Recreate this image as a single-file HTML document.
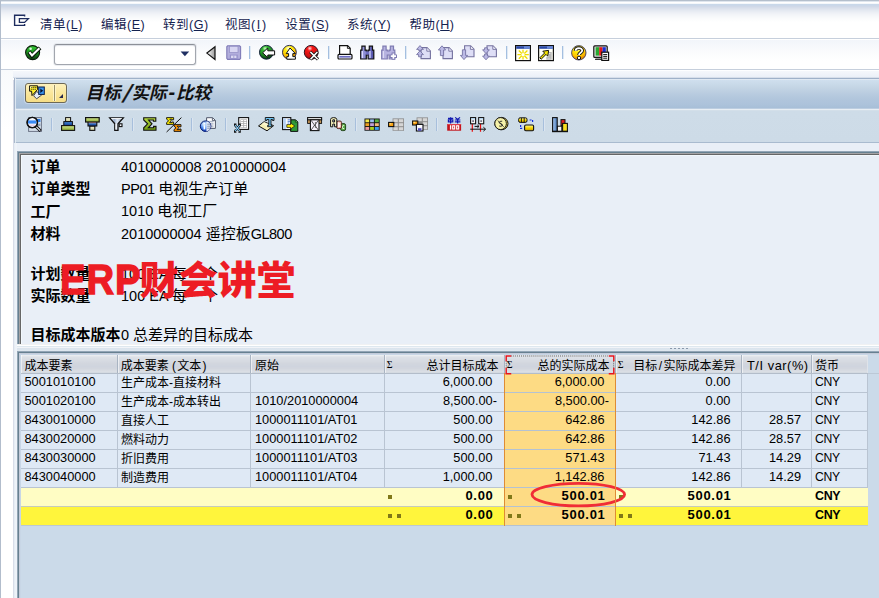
<!DOCTYPE html>
<html lang="zh-CN">
<head>
<meta charset="utf-8">
<title>目标/实际-比较</title>
<style>
*{box-sizing:border-box;margin:0;padding:0}
html,body{width:879px;height:598px;overflow:hidden;background:#fff}
body{position:relative;font-family:"Liberation Sans","Noto Sans CJK SC",sans-serif;font-size:12px;color:#000}
.abs{position:absolute}
#topgrad{left:0;top:0;width:879px;height:38px;background:linear-gradient(#b4bfcc 0,#b4bfcc 1px,#dfe6ee 1px,#dfe6ee 2px,#fff 2px,#fff 3px,#f5f8fb 3px,#f5f8fb 4px,#c8d8ea 4px,#cbd8e9 5.5px,#d0d9e8 6.5px,#dbe1ec 8.5px,#e4e9f1 10.5px,#eceff5 12.5px,#f2f4f8 14.5px,#f6f8fa 16.5px,#fafbfc 18.5px,#fff 22px)}
#leftedge{left:0;top:0;width:1px;height:598px;background:#b2bdcc}
.hline{left:1px;width:878px;height:1px;background:#c6cfdc}
.menu span{position:absolute;top:16px;font-size:12.5px;line-height:18px;color:#14224f;white-space:nowrap;letter-spacing:.5px}
.menu u{text-decoration:underline;text-underline-offset:1px}
#cmd{left:54px;top:44px;width:142px;height:21px;border:1px solid #a2a6ae;border-top-color:#8c9098;border-radius:3px;background:#fff;box-shadow:inset 0 1px 1px #dcdfe6,0 0 0 1px rgba(200,205,215,.35)}
.ic{position:absolute;width:16px;height:16px;overflow:visible}
.sep{position:absolute;width:2px;height:13px;background:linear-gradient(90deg,#a4bfe0 0,#a4bfe0 1px,#dfe9f4 1px)}
.sep.s2{background:linear-gradient(90deg,#a7bfdc 0,#a7bfdc 1px,#dbe5f0 1px)}
#tbtn{left:25px;top:83px;width:42px;height:20px;border:1px solid #6c6856;border-radius:3px;background:linear-gradient(#fdf1bc,#fae79c 50%,#f6dd86);box-shadow:0 0 0 1px rgba(210,222,236,.7)}
#tbtn i{position:absolute;left:27px;top:1px;width:3px;height:16px;background:linear-gradient(90deg,#fdf4c8 0,#fdf4c8 1px,#9c9268 1px,#9c9268 2px,#fdf4c8 2px)}
#tbtn b{position:absolute;left:33px;top:10px;width:0;height:0;border-left:4.5px solid transparent;border-bottom:4.5px solid #26264a}
#titlebar{left:14px;top:78px;width:865px;height:31px;background:linear-gradient(#9fb1c9 0,#9fb1c9 1px,#e0e9f3 1px,#e0e9f3 2px,#cfdfee 2px,#c9dae9 6px,#c3d4e4 10px,#bccee1 14px,#b5c9de 18px,#b0c5dc 22px,#adc3db 26px,#a8bfd8 29.5px,#bccde0 30.5px);box-shadow:inset 1px 0 0 #a3b3c9,inset 2px 0 0 rgba(232,240,248,.8)}
#title{left:85.5px;top:81px;font-size:17.5px;font-weight:bold;font-style:italic;line-height:24px;color:#111;white-space:nowrap}
#apptb{left:14px;top:109px;width:865px;height:34px;background:linear-gradient(#e8eef4 0,#e8eef4 1px,#d3dfe9 1px,#d3dfe9 2px,#cedce8 2px,#cddbe7 33px,#a9bbcf 33px);box-shadow:inset 1px 0 0 #a9b9cb,inset 2px 0 0 rgba(232,239,246,.85)}
#below{left:13px;top:143px;width:866px;height:455px;background:linear-gradient(90deg,#d8dde9 0,#d8dde9 1px,#e6edf4 1px,#e6edf4 2px,#edf2f8 2px,#edf2f8 3px,#eef3f9 3px,#eef3f9 4px,#e9eff7 4px)}
#info{left:17px;top:151px;width:870px;height:195px;border-bottom:1px solid #fff;background:#e9eff7;box-shadow:inset 0 -1px 0 #f0f1f2,inset 1px 1px 0 #93a5b6,inset 2px 2px 0 #668090,inset 3px 3px 0 #a4a3a5,inset 4px 4px 0 #666,inset 5px 5px 0 #f2f8fd}
.lbl{position:absolute;left:30.5px;font-size:15px;font-weight:bold;line-height:20px;white-space:nowrap}
.val{position:absolute;margin-top:-.4px;left:121px;font-size:14.5px;line-height:20px;white-space:nowrap}
.val b{font-weight:normal;font-size:15px}
#wm{left:60px;top:256px;font-size:39px;line-height:48px;font-weight:900;color:#ed1c24;white-space:nowrap;letter-spacing:0}
#wm .e{display:inline-block;width:79.5px;font-size:42px;font-weight:bold;-webkit-text-stroke:1.3px #ed1c24;letter-spacing:1px;transform:scaleX(.91);transform-origin:0 0;vertical-align:baseline}
#gridarea{left:17px;top:346px;width:862px;height:6px;background:linear-gradient(#dee8ef 0,#dee8ef 1px,#f2f4f8 1px,#f2f4f8 2px,#dbe4ed 2px,#dde6ee 4px,#e0e9f0 5px)}
#gridframe{left:17px;top:351px;width:870px;height:260px;background:#cbdae9;box-shadow:inset 1px 1px 0 #93a5b6,inset 2px 2px 0 #668090,inset 3px 3px 0 #c2cad9,inset 4px 4px 0 #c8d6e6}
#grip{left:670px;top:348px;width:19px;height:1px;background:repeating-linear-gradient(90deg,#8a98aa 0,#8a98aa 2px,transparent 2px,transparent 4px)}
table{position:absolute;left:21px;top:355px;border-collapse:collapse;table-layout:fixed;width:846px}
th{height:18px}
td,th{height:19px;border-right:1px solid #b9c4d2;border-bottom:1px solid #b9c4d2;font-weight:normal;font-size:12px;line-height:16px;vertical-align:top;padding:0 0 0 5px;text-align:left;white-space:nowrap;overflow:hidden;background:#dfe9f5}
th{height:18px;padding-top:5px;padding-left:4.5px;line-height:12px;vertical-align:top;background:linear-gradient(#eef0f2 0,#e2e5ea 1.5px,#dce0e6 2.5px,#d2d6de 8.5px,#cfd4de 11.5px,#d2d6de 13.5px,#dadee4 16.5px,#d4dae1 17.5px);border-right:1px solid #a9b4c2;border-bottom:1px solid #b3bdca;position:relative;box-shadow:inset 1px 0 0 rgba(255,255,255,.55)}
td.n,th.n{text-align:right;padding:0 11px 0 0;font-size:12.8px}
td.d{font-size:12.8px;padding-left:4.5px}
td.sel{background:#fddb84;border-bottom-color:#b4c2d2}
tr.s1 td,tr.s2 td{font-size:13px;letter-spacing:.7px}
tr.s1 td.n,tr.s2 td.n{padding-right:9.3px}
tr.s1 td{background:#fffdc4;font-weight:bold;border-right-color:#fffdc4;border-bottom-color:#c6cbbc}
tr.s2 td{background:#fff53c;font-weight:bold;border-right-color:#fff53c;border-bottom-color:#bcc8d0}
tr.s1 td.sel,tr.s2 td.sel{background:#fddb84;border-right-color:#fddb84;border-bottom-color:#b4c2d2}
td.n{position:relative}
td.neg{padding-right:6.5px}
th.n{padding:5px 5px 0 0;font-size:12px}
td.d1{padding-left:3.5px}
td.c{padding-top:2px;padding-left:3.5px;line-height:15px}
.sg{position:absolute;left:2.3px;top:3.5px;font-size:10px;line-height:12px;font-family:"Liberation Serif","DejaVu Serif",serif}
.dt{position:absolute;left:3px;top:7.5px;width:4px;height:4px;background:#807818}
.dt.d2{left:12px}
td.n:nth-child(5),td.n:nth-child(6){padding-right:10px}
td.n:nth-child(7){padding-right:9.5px}
td.neg:nth-child(4){padding-right:6.5px}td.neg:nth-child(5){padding-right:5.5px}
tr.s1 td.n:nth-child(4),tr.s2 td.n:nth-child(4){padding-right:10px}
tr.s1 td.n:nth-child(5),tr.s2 td.n:nth-child(5),tr.s1 td.n:nth-child(6),tr.s2 td.n:nth-child(6){padding-right:9px}
td.cy{font-size:12.2px;letter-spacing:-.35px;padding-left:3.5px}
tr.s1 td.cy,tr.s2 td.cy{font-size:12.4px;letter-spacing:-.3px}
#ell{left:529px;top:481px;width:99px;height:28px;overflow:visible}
#selL,#selR{top:373px;width:1px;height:153px;background:#de8c34}
#selL{left:504px}#selR{left:615px}
#hsel{left:504px;top:354.5px;width:112px;height:19.5px;overflow:visible}

</style>
</head>
<body>
<div class="abs" id="topgrad"></div>
<div class="abs hline" style="top:38px"></div>
<div class="abs" style="left:1px;top:39px;width:878px;height:30px;background:linear-gradient(#fff 0,#fff 1px,#f2f5fa 1px,#f4f7fb 4px,#fbfcfd 14px,#fff 22px)"></div>
<div class="abs hline" style="top:69px"></div>
<div class="abs" style="left:1px;top:70px;width:878px;height:8px;background:linear-gradient(#fdfeff 0,#fdfeff 1px,#f5f7fb 1px,#ebf0f8 7px,#d8dfea 7px)"></div>
<div class="abs" style="left:1px;top:70px;width:12px;height:528px;background:linear-gradient(#f8fafc,#fff 60px)"></div>
<div class="abs" style="left:13px;top:80px;width:1px;height:63px;background:#d5d9e6"></div>
<div class="abs" id="leftedge"></div>

<svg class="abs" style="left:13px;top:14px;width:18px;height:13px;overflow:visible" viewBox="0 0 18 13"><path d="M11.6 2.6 V1.2 H1.6 V11.4 H11.6 V10" fill="none" stroke="#1d2c5e" stroke-width="1.4"/><path d="M6.4 4.6 H15.4 L11.6 8.4 H6.4 Z" fill="none" stroke="#1d2c5e" stroke-width="1.3" stroke-linejoin="miter"/></svg>
<div class="menu">
<span style="left:40px">清单(<u>L</u>)</span>
<span style="left:101px">编辑(<u>E</u>)</span>
<span style="left:163px">转到(<u>G</u>)</span>
<span style="left:225px">视图(<u style="padding:0 1.2px">I</u>)</span>
<span style="left:285.3px">设置(<u>S</u>)</span>
<span style="left:347px">系统(<u>Y</u>)</span>
<span style="left:409.5px">帮助(<u>H</u>)</span>
</div>

<div class="abs" id="cmd"></div>
<svg class="abs" style="left:180px;top:50.5px;width:10px;height:6px" viewBox="0 0 10 6"><path d="M.6 .6 H9.2 L4.9 5.2 Z" fill="#1f2f62"/></svg>

<!-- ICONS-STD -->
<svg width="0" height="0" style="position:absolute">
<defs>
<radialGradient id="gG" cx="40%" cy="22%" r="80%"><stop offset="0" stop-color="#d8ffc8"/><stop offset=".22" stop-color="#34b834"/><stop offset=".6" stop-color="#1f8a24"/><stop offset="1" stop-color="#083010"/></radialGradient>
<radialGradient id="gY" cx="42%" cy="22%" r="85%"><stop offset="0" stop-color="#fffff0"/><stop offset=".25" stop-color="#ffee10"/><stop offset=".6" stop-color="#ffc800"/><stop offset="1" stop-color="#d86800"/></radialGradient>
<radialGradient id="gR" cx="40%" cy="22%" r="85%"><stop offset="0" stop-color="#ffe0e0"/><stop offset=".22" stop-color="#f81818"/><stop offset=".65" stop-color="#d01010"/><stop offset="1" stop-color="#600808"/></radialGradient>
<linearGradient id="gG2" x1="0" y1="0" x2="0" y2="1"><stop offset="0" stop-color="#38d038"/><stop offset=".45" stop-color="#1f9a22"/><stop offset="1" stop-color="#0c3c10"/></linearGradient>
<linearGradient id="gTri" x1="0" x2="1"><stop offset="0" stop-color="#fff"/><stop offset="1" stop-color="#9a9a9a"/></linearGradient>
<linearGradient id="gBin" x1="0" x2="1"><stop offset="0" stop-color="#a8a8e8"/><stop offset="1" stop-color="#5050a8"/></linearGradient>
</defs>
</svg>
<!-- check -->
<svg class="ic" style="left:25px;top:45px" viewBox="0 0 16 16"><circle cx="7.6" cy="7.6" r="7" fill="url(#gG2)" stroke="#0a1a0a" stroke-width="1.1"/><circle cx="5.6" cy="3.8" r="1.3" fill="#fff" fill-opacity=".85"/><path d="M4 6.8 L7 10.8 L15 2.8" fill="none" stroke="#0a160a" stroke-width="4" stroke-linejoin="miter"/><path d="M4.4 7.2 L7 10.4 L14.4 3.2" fill="none" stroke="#fff" stroke-width="2.1"/></svg>
<!-- triangle -->
<svg class="ic" style="left:206px;top:46px" viewBox="0 0 16 16"><path d="M9 .8 L9 13.4 L.9 7.1 Z" fill="url(#gTri)" stroke="#111" stroke-width="1.2" stroke-linejoin="miter"/></svg>
<!-- floppy grey -->
<svg class="ic" style="left:226px;top:45px" viewBox="0 0 16 16"><path d="M1.6 .8 H13.6 L14.6 1.8 V13.4 L13.6 14.4 H1.6 L.8 13.4 V1.8 Z" fill="#b2aedc" stroke="#807cb8" stroke-width="1.1"/><rect x="3.4" y="1.3" width="8.6" height="6.2" fill="#d8d6f2" stroke="#908cc4" stroke-width=".7"/><rect x="3.8" y="9.6" width="8" height="4.6" fill="#9894cc"/><rect x="5" y="10.6" width="5.4" height="2.4" fill="#dcdaf2"/><path d="M7.8 10.6 V13" stroke="#9894cc" stroke-width=".8"/></svg>
<!-- green back -->
<svg class="ic" style="left:259px;top:45px" viewBox="0 0 16 16"><circle cx="7.4" cy="7.3" r="6.9" fill="url(#gG)" stroke="#14203a" stroke-width="1"/><path d="M3.6 7.8 L8.8 3 L8.8 5.8 L15.6 5.8 L15.6 10 L8.8 10 L8.8 12.6 Z" fill="#fff" stroke="#111" stroke-width="1" stroke-linejoin="miter"/></svg>
<!-- yellow up -->
<svg class="ic" style="left:282px;top:45px" viewBox="0 0 16 16"><circle cx="7.4" cy="7.3" r="6.9" fill="url(#gY)" stroke="#2a2a50" stroke-width="1"/><path d="M8 3 L13.4 8.6 L10.8 8.6 L10.8 11.6 L13.4 11.6 L13.4 14.2 L4.8 14.2 L4.8 11.6 L6.6 11.6 L6.6 8.6 L4.2 8.6 Z" fill="#fff" stroke="#111" stroke-width="1" stroke-linejoin="miter"/></svg>
<!-- red cancel -->
<svg class="ic" style="left:304px;top:45px" viewBox="0 0 16 16"><circle cx="7.2" cy="7.3" r="6.9" fill="url(#gR)" stroke="#2a1420" stroke-width="1"/><path d="M6.2 6.8 L14 14.4 M13.6 6.8 L6.4 14.4" stroke="#181818" stroke-width="3.2"/><path d="M6.4 7 L13.8 14.2 M13.4 7 L6.6 14.2" stroke="#fff" stroke-width="1.6"/></svg>
<!-- print -->
<svg class="ic" style="left:337px;top:45px" viewBox="0 0 16 16"><path d="M2.6 .6 L10.6 .6 L13.2 3.2 L13.2 9.6 L2.6 9.6 Z" fill="#fff" stroke="#111" stroke-width="1.2"/><path d="M10.4 .8 L10.4 3.4 L13 3.4" fill="none" stroke="#111" stroke-width=".9"/><rect x="1" y="9.4" width="14" height="4.6" rx="1" fill="#f2f2fa" stroke="#111" stroke-width="1.2"/><rect x="2.4" y="11" width="11.2" height="1.6" fill="#6a6ac0"/></svg>
<!-- binoculars -->
<svg class="ic" style="left:360px;top:45px" viewBox="0 0 16 16"><path d="M.7 14 V5.2 H1.9 V1.2 H5.1 V5.2 H6.3 V6 H8.1 V5.2 H9.3 V1.2 H12.5 V5.2 H13.8 V14 H8.1 V10 H6.3 V14 Z" fill="url(#gBin)" stroke="#111" stroke-width="1.2" stroke-linejoin="miter"/><path d="M2.4 6 V13 M10 6 V13" stroke="#dcdcff" stroke-width="1.2"/><path d="M6.3 6.6 H8.1 V9.6 H6.3 Z" fill="#6a6ac0"/></svg>
<!-- binoculars plus grey -->
<svg class="ic" style="left:381px;top:45px" viewBox="0 0 16 16"><path d="M.7 14 V5.2 H1.9 V1.2 H5.1 V5.2 H6.3 V6 H8.1 V5.2 H9.3 V1.2 H12.5 V5.2 H13.8 V14 H8.1 V10 H6.3 V14 Z" fill="#b6b3e0" stroke="#7e7bb2" stroke-width="1.2" stroke-linejoin="miter"/><path d="M2.4 6 V13" stroke="#dcdaf4" stroke-width="1.2"/><path d="M12.4 7.6 V14.8 M8.8 11.2 H16" stroke="#7e7bb2" stroke-width="3.6"/><path d="M12.4 8.6 V13.8 M9.8 11.2 H15" stroke="#fff" stroke-width="1.7"/></svg>
<!-- first page grey -->
<svg class="ic" style="left:416px;top:45px" viewBox="0 0 16 16"><path d="M5 2.6 L11 2.6 L14.4 6 L14.4 13.6 L5 13.6 Z" fill="#dedef6" stroke="#74729f" stroke-width="1.1"/><path d="M10.8 2.8 L10.8 6.2 L14.2 6.2" fill="#f2f2fc" stroke="#74729f" stroke-width=".9"/><path d="M4 .6 L7.4 4.4 L5.4 4.4 L5.4 5.4 L2.6 5.4 L2.6 4.4 L.6 4.4 Z M4 5.8 L7.4 9.6 L5.4 9.6 L5.4 11.8 L2.6 11.8 L2.6 9.6 L.6 9.6 Z" fill="#bcbae6" stroke="#7674a4" stroke-width=".9"/></svg>
<!-- prev page grey -->
<svg class="ic" style="left:437.5px;top:45px" viewBox="0 0 16 16"><path d="M5 2.6 L11 2.6 L14.4 6 L14.4 13.6 L5 13.6 Z" fill="#dedef6" stroke="#74729f" stroke-width="1.1"/><path d="M10.8 2.8 L10.8 6.2 L14.2 6.2" fill="#f2f2fc" stroke="#74729f" stroke-width=".9"/><path d="M4 .8 L7.6 5 L5.6 5 L5.6 10.6 L2.4 10.6 L2.4 5 L.4 5 Z" fill="#bcbae6" stroke="#7674a4" stroke-width=".9"/></svg>
<!-- next page grey -->
<svg class="ic" style="left:460px;top:45px" viewBox="0 0 16 16"><path d="M4.6 .8 L10.6 .8 L14 4.2 L14 11.8 L4.6 11.8 Z" fill="#dedef6" stroke="#74729f" stroke-width="1.1"/><path d="M10.4 1 L10.4 4.4 L13.8 4.4" fill="#f2f2fc" stroke="#74729f" stroke-width=".9"/><path d="M4 14.6 L7.6 10.4 L5.6 10.4 L5.6 4.8 L2.4 4.8 L2.4 10.4 L.4 10.4 Z" fill="#bcbae6" stroke="#7674a4" stroke-width=".9"/></svg>
<!-- last page grey -->
<svg class="ic" style="left:482px;top:45px" viewBox="0 0 16 16"><path d="M5 .8 L11 .8 L14.4 4.2 L14.4 11.8 L5 11.8 Z" fill="#dedef6" stroke="#74729f" stroke-width="1.1"/><path d="M10.8 1 L10.8 4.4 L14.2 4.4" fill="#f2f2fc" stroke="#74729f" stroke-width=".9"/><path d="M4 14.8 L7.4 11 L5.4 11 L5.4 9 L2.6 9 L2.6 11 L.6 11 Z M4 8.6 L7.4 4.8 L5.4 4.8 L5.4 2.8 L2.6 2.8 L2.6 4.8 L.6 4.8 Z" fill="#bcbae6" stroke="#7674a4" stroke-width=".9"/></svg>
<!-- new window -->
<svg class="ic" style="left:515px;top:45px" viewBox="0 0 16 16"><rect x=".6" y=".6" width="14.8" height="15" fill="#fffff6" stroke="#111" stroke-width="1.2"/><rect x="1.2" y="1.2" width="13.6" height="2.6" fill="#2848a8"/><rect x="9" y="1.2" width="5.8" height="2.6" fill="#6888d8"/><path d="M8 4.8 L8 8.2 M8 11 L8 14.6 M2.4 9.6 L6.4 9.6 M9.6 9.6 L13.8 9.6 M3.8 5.6 L6.8 8.4 M9.4 10.8 L12.4 13.8 M12.4 5.6 L9.4 8.4 M6.8 10.8 L3.8 13.8" stroke="#f0dc00" stroke-width="1.3"/></svg>
<!-- shortcut -->
<svg class="ic" style="left:537.5px;top:45px" viewBox="0 0 16 16"><rect x=".6" y=".6" width="14.8" height="15" fill="#fffff6" stroke="#111" stroke-width="1.2"/><rect x="1.2" y="1.2" width="13.6" height="2.6" fill="#2848a8"/><rect x="9" y="1.2" width="5.8" height="2.6" fill="#6888d8"/><path d="M10.4 7.6 L13 7.6 L13 14 L9 14 L9 12.4 L11.6 12.4 L11.6 9" fill="none" stroke="#b8b8b8" stroke-width="1.4"/><path d="M1.8 12.8 L6.6 8 L4.8 6.2 L10.6 5.4 L9.8 11.2 L8 9.4 L3.2 14.2 Z" fill="#f6e400" stroke="#111" stroke-width="1"/></svg>
<!-- help -->
<svg class="ic" style="left:571px;top:45px" viewBox="0 0 16 16"><circle cx="7.8" cy="7.8" r="7.2" fill="url(#gY)" stroke="#3a3a60" stroke-width=".9"/><path d="M4.6 5.8 C4.6 2.2 11.2 2.2 11.2 5.6 C11.2 7.8 8 7.8 8 10" fill="none" stroke="#111" stroke-width="3.6"/><path d="M4.6 5.8 C4.6 2.2 11.2 2.2 11.2 5.6 C11.2 7.8 8 7.8 8 10" fill="none" stroke="#fff" stroke-width="1.8"/><circle cx="8" cy="12.9" r="1.7" fill="#fff" stroke="#111" stroke-width="1"/></svg>
<!-- monitor -->
<svg class="ic" style="left:593px;top:45px" viewBox="0 0 16 16"><rect x=".8" y=".8" width="13.4" height="11.6" rx="1" fill="#e4e4e4" stroke="#111" stroke-width="1.2"/><rect x="2.6" y="2.2" width="3.6" height="8.4" fill="#28a830"/><rect x="6.2" y="2.2" width="3.4" height="8.4" fill="#e01818"/><rect x="9.6" y="2.2" width="3.2" height="8.4" fill="#1830d8"/><rect x="2.4" y="12.6" width="8" height="1.8" fill="#999" stroke="#111" stroke-width=".8"/><rect x="8.8" y="7.2" width="6.8" height="8.2" fill="#fff" stroke="#111" stroke-width="1.2"/><path d="M10.2 9.6 L14.2 9.6 M10.2 11.4 L14.2 11.4 M10.2 13.2 L14.2 13.2" stroke="#111" stroke-width="1"/></svg>
<!-- /ICONS-STD -->


<div class="abs" id="titlebar"></div>
<div class="abs" id="title">目标<span style="display:inline-block;width:11px;font-size:24.5px;line-height:20px;position:relative;top:2.5px;left:3.5px;transform:skewX(-7deg);font-weight:normal;-webkit-text-stroke:.5px #111">/</span>实际<span style="display:inline-block;width:9.5px;text-align:center;font-size:20px;line-height:20px;position:relative;left:.5px">-</span>比较</div>
<div class="abs" id="apptb"></div>
<div class="abs" id="below"></div>
<div class="abs" id="info"></div>
<!-- SEPS -->
<div class="sep" style="left:249px;top:46px"></div>
<div class="sep" style="left:328px;top:46px"></div>
<div class="sep" style="left:405px;top:46px"></div>
<div class="sep" style="left:506px;top:46px"></div>
<div class="sep" style="left:562px;top:46px"></div>
<div class="sep s2" style="left:51px;top:118px"></div>
<div class="sep s2" style="left:132px;top:118px"></div>
<div class="sep s2" style="left:191px;top:118px"></div>
<div class="sep s2" style="left:225px;top:118px"></div>
<div class="sep s2" style="left:355px;top:118px"></div>
<div class="sep s2" style="left:436px;top:118px"></div>
<div class="sep s2" style="left:543px;top:118px"></div>
<!-- title button -->
<div class="abs" id="tbtn"><i></i><b></b></div>
<svg class="ic" style="left:29px;top:84.5px" viewBox="0 0 16 16"><path d="M7.6 6.4 L12.4 10.2 L7.6 13.8 L4.6 10.8 Z" fill="#e4ecf8" stroke="#1a2030" stroke-width=".8"/><path d="M.6 .8 L8.6 .8 L8.6 4.4 L3 10.6 L2.6 6.2 L.6 6.2 Z" fill="#fff030" stroke="#111" stroke-width="1" stroke-linejoin="miter"/><path d="M1.2 1.4 L4 1.4 L1.2 3.4 Z" fill="#fff" fill-opacity=".8"/><path d="M2.2 2.6 L3.4 2.6 M4.2 2.6 L5.4 2.6 M6.2 2.6 L7.4 2.6 M2.2 4.3 L3.4 4.3 M4.2 4.3 L5.4 4.3 M6.2 4.3 L7 4.3" stroke="#222" stroke-width=".9"/><rect x="9.7" y="2" width="5.6" height="7.4" fill="#3a96f0" stroke="#0a1c48" stroke-width="1"/><path d="M11.3 3.4 L14.2 5.7 L11.3 8 Z" fill="#05102c"/></svg>
<!-- APP ICONS -->
<svg width="0" height="0" style="position:absolute"><defs>
<linearGradient id="gGr" x1="0" y1="0" x2="0" y2="1"><stop offset="0" stop-color="#d4e890"/><stop offset="1" stop-color="#8aa830"/></linearGradient>
<linearGradient id="gBl" x1="0" y1="0" x2="0" y2="1"><stop offset="0" stop-color="#4a90e0"/><stop offset="1" stop-color="#103a90"/></linearGradient>
<linearGradient id="gCr" x1="0" y1="0" x2="0" y2="1"><stop offset="0" stop-color="#f8f8d8"/><stop offset="1" stop-color="#c8c890"/></linearGradient>
<linearGradient id="gFu" x1="0" y1="0" x2="1" y2="0"><stop offset="0" stop-color="#fff"/><stop offset="1" stop-color="#90a0b8"/></linearGradient>
<linearGradient id="gFu2" x1="0" y1="0" x2="1" y2="0"><stop offset="0" stop-color="#e8eef8"/><stop offset=".35" stop-color="#9cb0cc"/><stop offset=".55" stop-color="#dfe8f4"/><stop offset="1" stop-color="#8a9cb8"/></linearGradient>
<linearGradient id="gSg" x1="0" y1="0" x2="0" y2="1"><stop offset="0" stop-color="#b8dc40"/><stop offset="1" stop-color="#6e9a10"/></linearGradient>
<radialGradient id="gInfo" cx="35%" cy="30%" r="75%"><stop offset="0" stop-color="#e8f4ff"/><stop offset=".5" stop-color="#4a8af0"/><stop offset="1" stop-color="#0828a0"/></radialGradient>
<radialGradient id="gCoin" cx="40%" cy="35%" r="70%"><stop offset="0" stop-color="#fffbd0"/><stop offset=".7" stop-color="#f0e070"/><stop offset="1" stop-color="#b8a030"/></radialGradient>
<linearGradient id="gDb" x1="0" y1="0" x2="0" y2="1"><stop offset="0" stop-color="#fff8a0"/><stop offset=".5" stop-color="#f8d800"/><stop offset="1" stop-color="#c89800"/></linearGradient>
<linearGradient id="gBar" x1="0" y1="0" x2="1" y2="0"><stop offset="0" stop-color="#a8c8f0"/><stop offset="1" stop-color="#4878b8"/></linearGradient>
</defs></svg>
<!-- magnifier -->
<svg class="ic" style="left:26px;top:117px" viewBox="0 0 16 16"><rect x="2.6" y=".6" width="12.8" height="13.8" fill="#d6e0ec" stroke="#6c7486" stroke-width="1"/><rect x="10" y="2" width="4.4" height="3" fill="#2a78e0"/><rect x="11.4" y="6.6" width="3" height="2.4" fill="#8aa0b8"/><circle cx="6.3" cy="5.5" r="5.2" fill="#f4f8ff" stroke="#111" stroke-width="1.3"/><path d="M2 3.4 H10.6 V6.6 H2 Z" fill="#3a8af4"/><path d="M3.4 8.2 H9.2" stroke="#e0b0d0" stroke-width=".8"/><circle cx="6.3" cy="5.5" r="5.2" fill="none" stroke="#111" stroke-width="1.3"/><path d="M10 9.4 L14.6 14" stroke="#111" stroke-width="3"/><path d="M10.4 9.8 L14.2 13.6" stroke="#e8ecf4" stroke-width="1.1"/></svg>
<!-- sort asc -->
<svg class="ic" style="left:61px;top:117px" viewBox="0 0 16 16"><rect x="4.6" y=".6" width="5" height="4.2" fill="url(#gCr)" stroke="#111" stroke-width="1"/><rect x="2.8" y="4.6" width="8.6" height="4" fill="url(#gBl)" stroke="#111" stroke-width="1"/><rect x=".6" y="8.6" width="13" height="4.8" fill="url(#gGr)" stroke="#111" stroke-width="1.1"/></svg>
<!-- sort desc -->
<svg class="ic" style="left:84.6px;top:117px" viewBox="0 0 16 16"><rect x="4.8" y="9" width="5" height="4.4" fill="url(#gCr)" stroke="#111" stroke-width="1.1"/><rect x="3" y="5" width="8.8" height="4" fill="url(#gBl)" stroke="#111" stroke-width="1.1"/><rect x="3.6" y="5" width="7.6" height="1.2" fill="#f4b0b0"/><rect x=".6" y=".6" width="13.6" height="4.4" fill="url(#gGr)" stroke="#111" stroke-width="1.2"/></svg>
<!-- filter -->
<svg class="ic" style="left:108.6px;top:117px" viewBox="0 0 16 16"><path d="M.7 .8 L14.3 .8 L9 6.8 L9 13.3 L5.8 13.3 L5.8 6.8 Z" fill="url(#gFu2)" stroke="#111" stroke-width="1.3" stroke-linejoin="miter"/><path d="M2.2 1.5 L12.8 1.5" stroke="#fff" stroke-width=".9"/><path d="M7 6.6 L7 12.6" stroke="#fff" stroke-width="1.2"/><rect x="10.2" y="6.8" width="2.8" height="2.8" fill="#f4f8fc" stroke="#111" stroke-width="1.1"/></svg>
<!-- sigma -->
<svg class="ic" style="left:142.6px;top:117px" viewBox="0 0 16 16"><path d="M.7 .7 L12.8 .7 L12.8 4.2 L10.4 4.2 L10.4 3 L5.6 3 L9 6.8 L5.4 10.8 L10.6 10.8 L10.6 9.4 L13 9.4 L13 13.3 L.7 13.3 L.7 10.8 L4.6 6.8 L.7 3 Z" fill="url(#gSg)" stroke="#111" stroke-width="1.1" stroke-linejoin="miter"/></svg>
<!-- subtotal -->
<svg class="ic" style="left:166px;top:117px" viewBox="0 0 16 16"><path d="M15.4 .6 L.6 15" stroke="#111" stroke-width="1"/><path d="M.6 .6 L7.6 .6 L7.6 2.8 L6 2.8 L6 2.2 L3.8 2.2 L5.4 3.8 L3.6 5.6 L6 5.6 L6 5 L7.6 5 L7.6 7.4 L.6 7.4 L.6 5.6 L2.6 3.8 L.6 2.2 Z" fill="#f8e800" stroke="#111" stroke-width=".9"/><path d="M8 7.6 L15 7.6 L15 9.8 L13.4 9.8 L13.4 9.2 L11.2 9.2 L12.8 10.8 L11 12.6 L13.4 12.6 L13.4 12 L15 12 L15 14.4 L8 14.4 L8 12.6 L10 10.8 L8 9.2 Z" fill="#f89000" stroke="#111" stroke-width=".9"/></svg>
<!-- info -->
<svg class="ic" style="left:200px;top:117px" viewBox="0 0 16 16"><path d="M6.6 .7 L12.6 .7 L15.4 3.4 L15.4 11.4 L6.6 11.4 Z" fill="#fff" stroke="#50586a" stroke-width="1"/><path d="M12.4 1 L12.4 3.6 L15.2 3.6" fill="none" stroke="#50586a" stroke-width=".9"/><path d="M8.4 4.4 L13.6 4.4 M8.4 6.2 L13.6 6.2 M8.4 8 L13.6 8 M8.4 9.8 L13.6 9.8" stroke="#8a98b0" stroke-width=".8"/><circle cx="5.6" cy="9.2" r="5.3" fill="url(#gInfo)" stroke="#061a70" stroke-width="1"/><path d="M6.4 4.2 A5.2 5.2 0 0 1 6.4 14.4 Z" fill="#fff" fill-opacity=".85"/><rect x="3.6" y="8.2" width="1.7" height="4.2" fill="#fff"/><rect x="3.6" y="5.8" width="1.7" height="1.6" fill="#fff"/><path d="M7.2 7.2 L10 7.2 M7.2 9.2 L10.4 9.2 M7.2 11.2 L10 11.2" stroke="#7080a0" stroke-width=".8"/></svg>
<!-- excel -->
<svg class="ic" style="left:234px;top:117px" viewBox="0 0 16 16"><rect x="4.7" y=".6" width="9.9" height="11.8" fill="#fff" stroke="#111" stroke-width="1.1"/><rect x="6.4" y="2.4" width="6.6" height="8.4" fill="#a6a6a6"/><g fill="#fff"><rect x="7" y="3" width="2.3" height="1.3"/><rect x="10.1" y="3" width="2.3" height="1.3"/><rect x="7" y="5" width="2.3" height="1.3"/><rect x="10.1" y="5" width="2.3" height="1.3"/><rect x="7" y="7" width="2.3" height="1.3"/><rect x="10.1" y="7" width="2.3" height="1.3"/><rect x="7" y="9" width="2.3" height="1.3"/><rect x="10.1" y="9" width="2.3" height="1.3"/></g><path d="M.9 8 L5.9 14.2 M5.9 8 L.9 14.2 M0 7.6 H2.4 M4.4 7.6 H6.8 M0 14.6 H2.4 M4.4 14.6 H6.8" stroke="#111" stroke-width="2.3"/><path d="M1 8 L5.8 14.2 M5.8 8 L1 14.2" stroke="#84ccfa" stroke-width="1.1"/></svg>
<!-- word -->
<svg class="ic" style="left:258px;top:117px" viewBox="0 0 16 16"><path d="M.5 8.9 L6.1 4.7 L15.6 8.7 L9 13.8 Z" fill="#f6efb4" stroke="#111" stroke-width="1"/><path d="M6.1 4.9 L15 8.7 L12 11 L3.6 7 Z" fill="#fffbe0" fill-opacity=".6"/><path d="M7.3 .5 H16 V3.5 H14.5 V2.5 H13 V8.3 H14.2 V9.7 H9.6 V8.3 H10.8 V2.5 H8.9 V3.5 H7.3 Z" fill="#6cc2f2" stroke="#111" stroke-width=".9" stroke-linejoin="miter"/></svg>
<!-- export -->
<svg class="ic" style="left:282px;top:117px" viewBox="0 0 16 16"><path d="M8.6 2.8 L13.6 2.8 L15.8 5 L15.8 14.4 L8.6 14.4 Z" fill="#2f9a38" stroke="#111" stroke-width="1"/><path d="M13.4 3 L13.4 5.2 L15.6 5.2" fill="#7ac070" stroke="#0a3a10" stroke-width=".7"/><rect x=".6" y=".6" width="8.2" height="12" fill="#fafcff" stroke="#111" stroke-width="1.1"/><rect x="1.2" y="1.2" width="2.6" height="10.8" fill="#b4d0f4"/><path d="M5.6 2.8 L8 2.8 M5.6 4.4 L8 4.4 M5.6 6 L7.4 6" stroke="#4a78c8" stroke-width=".9"/><path d="M4.8 7.6 L8.6 7.6 L8.6 6 L12.8 9 L8.6 12 L8.6 10.4 L4.8 10.4 Z" fill="#fff000" stroke="#222" stroke-width=".8"/></svg>
<!-- mail -->
<svg class="ic" style="left:307px;top:117px" viewBox="0 0 16 16"><rect x=".6" y="2.4" width="14" height="4" fill="#c89858" stroke="#111" stroke-width=".9"/><rect x=".6" y=".6" width="14" height="2.2" fill="#fff" stroke="#111" stroke-width="1.1"/><rect x="3.4" y="2.8" width="8.6" height="10.8" fill="#f6f2fc" stroke="#111" stroke-width="1.1"/><path d="M4 3.2 L7.7 8.4 L11.4 3.2 M4 13.2 L7.7 8 L11.4 13.2" fill="none" stroke="#333" stroke-width=".8"/><path d="M8.4 5 L8.4 11" stroke="#555" stroke-width=".8"/></svg>
<!-- abc -->
<svg class="ic" style="left:330px;top:117px" viewBox="0 0 16 16"><rect x="10.6" y="6.6" width="5" height="7" rx="1.6" fill="#58a848" stroke="#1a3a10" stroke-width=".9"/><path d="M14.2 8.6 Q12.2 8.2 12.2 10.1 Q12.2 12 14.2 11.6" fill="none" stroke="#e4ffd8" stroke-width="1"/><rect x="6.6" y="4" width="5" height="7.6" rx="1.6" fill="#f0b0a8" stroke="#4a2018" stroke-width=".9"/><path d="M8.6 5.6 L8.6 10 M8.6 5.8 L10.2 6.6 L8.6 7.8 L10.4 8.8 L8.6 10" fill="none" stroke="#fff" stroke-width=".9"/><path d="M.6 9.8 L.6 2.4 Q.6 .6 3.6 .6 Q6.8 .6 6.8 2.4 L6.8 9.8 L4.6 9.8 L4.6 7 L2.8 7 L2.8 9.8 Z M2.8 5 L4.6 5 L4.6 2.8 L2.8 2.8 Z" fill="#fdf9c4" stroke="#111" stroke-width="1" fill-rule="evenodd"/></svg>
<!-- grid colour -->
<svg class="ic" style="left:364px;top:118px" viewBox="0 0 16 16"><rect x=".5" y=".5" width="15.2" height="12.2" fill="#111"/><rect x="1.4" y="1.4" width="3.8" height="2.9" fill="#f4e84a"/><rect x="6.1" y="1.4" width="3.8" height="2.9" fill="#9ac0f0"/><rect x="10.8" y="1.4" width="4" height="2.9" fill="#58b040"/><rect x="1.4" y="5.2" width="3.8" height="2.9" fill="#f0a020"/><rect x="6.1" y="5.2" width="3.8" height="2.9" fill="#c0a0d8"/><rect x="10.8" y="5.2" width="4" height="2.9" fill="#f0b878"/><rect x="1.4" y="9" width="3.8" height="2.9" fill="#f09aa0"/><rect x="6.1" y="9" width="3.8" height="2.9" fill="#a8d020"/><rect x="10.8" y="9" width="4" height="2.9" fill="#38a0f0"/></svg>
<!-- grid grey orange -->
<svg class="ic" style="left:387.5px;top:118px" viewBox="0 0 16 16"><rect x="4.6" y=".4" width="11.4" height="12.4" fill="#8c8c8c"/><g fill="#d6d6d6"><rect x="5.4" y="1.2" width="4.4" height="3"/><rect x="10.8" y="1.2" width="4.4" height="3"/><rect x="5.4" y="5.2" width="4.4" height="3"/><rect x="10.8" y="5.2" width="4.4" height="3"/><rect x="5.4" y="9.2" width="4.4" height="3"/><rect x="10.8" y="9.2" width="4.4" height="3"/></g><rect x=".6" y="4.4" width="5.2" height="4.2" fill="#f8a010" stroke="#111" stroke-width="1.1"/><rect x="1.4" y="5.2" width="2" height="1.2" fill="#ffe080"/></svg>
<!-- grid grey save -->
<svg class="ic" style="left:412px;top:117px" viewBox="0 0 16 16"><rect x="4.6" y=".4" width="11.4" height="12.4" fill="#8c8c8c"/><g fill="#d6d6d6"><rect x="5.4" y="1.2" width="4.4" height="3"/><rect x="10.8" y="1.2" width="4.4" height="3"/><rect x="10.8" y="5.2" width="4.4" height="3"/><rect x="10.8" y="9.2" width="4.4" height="3"/></g><rect x=".6" y="4" width="5.2" height="4" fill="#f8a010" stroke="#111" stroke-width="1.1"/><rect x="1.4" y="4.8" width="2" height="1.2" fill="#ffe080"/><rect x="4.4" y="7.4" width="6.6" height="6.6" fill="#eef" stroke="#111" stroke-width="1.1"/><rect x="5.6" y="8" width="4.2" height="2.4" fill="#fff"/><rect x="6" y="11.2" width="3.4" height="2.6" fill="#5050b8"/></svg>
<!-- currency -->
<svg class="ic" style="left:447px;top:117px" viewBox="0 0 16 16"><rect x=".2" y="7" width="13.9" height="6.7" fill="#c4141c"/><rect x=".2" y="7" width="13.9" height="1" fill="#e04048"/><rect x="2.9" y="8.2" width="1.4" height="4.4" fill="#fff"/><rect x="5.7" y="8.8" width="2" height="3.2" fill="none" stroke="#fff" stroke-width="1.2"/><rect x="9.7" y="8.8" width="2" height="3.2" fill="none" stroke="#fff" stroke-width="1.2"/><path d="M3.6 .2 L3.6 6.6 M1 1.4 L6.2 1.4 M1.4 2.8 L5.8 2.8 L5.8 4.8 L1.4 4.8 Z" fill="none" stroke="#1018b0" stroke-width="1.2"/><path d="M8.2 .4 L10.6 2.4 L13 .4 M10.6 2.4 L10.6 6.6 M7.8 3 L13.4 3 M7.8 4.8 L13.4 4.8" fill="none" stroke="#1018b0" stroke-width="1.2"/></svg>
<!-- columns -->
<svg class="ic" style="left:470px;top:117px" viewBox="0 0 16 16"><path d="M2.3 6.6 L2.3 14.8 M10.5 6.6 L10.5 14.8" stroke="#e81010" stroke-width="1.2"/><rect x=".6" y=".6" width="5" height="6.2" fill="#f6f6f6" stroke="#111" stroke-width="1.1"/><rect x="8.7" y=".6" width="5" height="6.2" fill="#f6f6f6" stroke="#111" stroke-width="1.1"/><rect x="1.2" y="1.2" width="3.8" height="1.2" fill="#a8d0f0"/><rect x="9.3" y="1.2" width="3.8" height="1.2" fill="#a8d0f0"/><rect x="2.2" y="3.2" width="1.8" height="1.8" fill="#778"/><rect x="10.3" y="3.2" width="1.8" height="1.8" fill="#778"/><path d="M.2 12.2 L15.4 12.2 M13.4 10.2 L15.6 12.2 L13.4 14.2 M4.6 9.4 L8.8 9.4 M7.4 8 L9 9.4 L7.4 10.8" fill="none" stroke="#111" stroke-width="1"/></svg>
<!-- coin -->
<svg class="ic" style="left:494px;top:117px" viewBox="0 0 16 16"><ellipse cx="7.4" cy="6.6" rx="6.6" ry="6.2" fill="#e8d040" stroke="#111" stroke-width="1"/><ellipse cx="6.6" cy="6.6" rx="5.8" ry="6" fill="#f6f2a8" stroke="#111" stroke-width=".9"/><path d="M4 3.6 L9.6 9.8 M8.2 4.2 Q5.6 3.8 5.2 5.6 Q5.6 7 7 6.8 Q8.8 7 8.2 8.6 Q7.2 9.8 5.2 9" fill="none" stroke="#222" stroke-width=".9"/></svg>
<!-- db -->
<svg class="ic" style="left:518px;top:117px" viewBox="0 0 16 16"><rect x=".6" y=".8" width="8.4" height="4.6" rx="1.6" fill="url(#gDb)" stroke="#111" stroke-width="1"/><path d="M3.4 1 L3.4 5.2 M6.2 1 L6.2 5.2" stroke="#111" stroke-width=".9"/><rect x="6.6" y="8" width="9" height="5.8" rx="1.2" fill="url(#gDb)" stroke="#111" stroke-width="1.1"/><path d="M11.6 3 L14.6 3 L14.6 6 M2.6 8 L2.6 11.4 L5 11.4" fill="none" stroke="#1030e0" stroke-width="1.2" stroke-dasharray="2 1"/></svg>
<!-- chart -->
<svg class="ic" style="left:552px;top:117px" viewBox="0 0 16 16"><rect x=".6" y=".6" width="4.6" height="13.6" fill="url(#gBar)" stroke="#111" stroke-width="1.1"/><rect x="9" y="2.6" width="4" height="6" fill="#e02020" stroke="#111" stroke-width="1"/><rect x="5.4" y="9.2" width="4.4" height="5" fill="#f4f4f4" stroke="#111" stroke-width="1"/><rect x="10.6" y="6.4" width="4.8" height="7.8" fill="#f8e020" stroke="#111" stroke-width="1.1"/><path d="M0 14.6 L16 14.6" stroke="#111" stroke-width="1.2"/></svg>
<!-- /APP ICONS -->


<div class="lbl" style="top:157.3px">订单</div><div class="val" style="top:157.3px">4010000008 2010000004</div>
<div class="lbl" style="top:179.3px">订单类型</div><div class="val" style="top:179.3px"><span style="letter-spacing:-.45px">PP01 </span><b>电视生产订单</b></div>
<div class="lbl" style="top:201.5px">工厂</div><div class="val" style="top:201.5px">1010 <b>电视工厂</b></div>
<div class="lbl" style="top:224px">材料</div><div class="val" style="top:224px">2010000004 <b>遥控板</b><span style="letter-spacing:-.5px">GL800</span></div>
<div class="lbl" style="top:264.3px">计划数量</div><div class="val" style="top:264.3px">100 EA <b>每</b> &nbsp;&nbsp;&nbsp;<b>个</b></div>
<div class="lbl" style="top:286.3px">实际数量</div><div class="val" style="top:286.3px">100 EA <b>每</b> &nbsp;&nbsp;&nbsp;<b>个</b></div>
<div class="lbl" style="top:325.3px">目标成本版本</div><div class="val" style="top:325.3px;left:121px">0 <b>总差异的目标成本</b></div>
<div class="abs" id="wm"><span class="e">ERP</span>财会讲堂</div>

<div class="abs" id="gridarea"></div>
<div class="abs" id="gridframe"></div><div class="abs" id="grip"></div><div class="abs" style="left:867px;top:373px;width:12px;height:1px;background:#bcc8d6"></div>
<table>
<colgroup><col style="width:96px"><col style="width:133px"><col style="width:134px"><col style="width:120px"><col style="width:111px"><col style="width:126px"><col style="width:70px"><col style="width:56px"></colgroup>
<tr><th style="padding-left:3.5px">成本要素</th><th style="padding-left:3.2px">成本要素 <span style="letter-spacing:1.2px">(</span>文本<span style="padding-left:1.2px">)</span></th><th>原始</th><th class="n"><span class="sg">Σ</span>总计目标成本</th><th class="n hs"><span class="sg">Σ</span>总的实际成本</th><th class="n"><span class="sg">Σ</span>目标<span style="padding:0 1.5px">/</span>实际成本差异</th><th style="font-size:12.8px;letter-spacing:.55px;padding-left:5.5px">T/I var(%)</th><th style="padding-left:3.5px;border-right-color:#dfe3e9">货币</th></tr>
<tr><td class="d d1">5001010100</td><td class="c">生产成本-直接材料</td><td class="d"></td><td class="n">6,000.00</td><td class="n sel">6,000.00</td><td class="n">0.00</td><td class="n"></td><td class="d cy">CNY</td></tr>
<tr><td class="d d1">5001020100</td><td class="c">生产成本-成本转出</td><td class="d">1010/2010000004</td><td class="n neg">8,500.00-</td><td class="n sel neg">8,500.00-</td><td class="n">0.00</td><td class="n"></td><td class="d cy">CNY</td></tr>
<tr><td class="d d1">8430010000</td><td class="c">直接人工</td><td class="d">1000011101/AT01</td><td class="n">500.00</td><td class="n sel">642.86</td><td class="n">142.86</td><td class="n">28.57</td><td class="d cy">CNY</td></tr>
<tr><td class="d d1">8430020000</td><td class="c">燃料动力</td><td class="d">1000011101/AT02</td><td class="n">500.00</td><td class="n sel">642.86</td><td class="n">142.86</td><td class="n">28.57</td><td class="d cy">CNY</td></tr>
<tr><td class="d d1">8430030000</td><td class="c">折旧费用</td><td class="d">1000011101/AT03</td><td class="n">500.00</td><td class="n sel">571.43</td><td class="n">71.43</td><td class="n">14.29</td><td class="d cy">CNY</td></tr>
<tr><td class="d d1">8430040000</td><td class="c">制造费用</td><td class="d">1000011101/AT04</td><td class="n">1,000.00</td><td class="n sel">1,142.86</td><td class="n">142.86</td><td class="n">14.29</td><td class="d cy">CNY</td></tr>
<tr class="s1"><td></td><td></td><td></td><td class="n"><i class="dt"></i>0.00</td><td class="n sel"><i class="dt"></i>500.01</td><td class="n"><i class="dt"></i>500.01</td><td class="n"></td><td class="d cy">CNY</td></tr>
<tr class="s2"><td></td><td></td><td></td><td class="n"><i class="dt"></i><i class="dt d2"></i>0.00</td><td class="n sel"><i class="dt"></i><i class="dt d2"></i>500.01</td><td class="n"><i class="dt"></i><i class="dt d2"></i>500.01</td><td class="n"></td><td class="d cy">CNY</td></tr>
</table>
<svg class="abs" id="ell" viewBox="0 0 99 28"><ellipse cx="49.3" cy="13.6" rx="46.3" ry="11.3" fill="none" stroke="#f02c36" stroke-width="2.8"/></svg>
<div class="abs" id="selL"></div><div class="abs" id="selR"></div>
<svg class="abs" id="hsel" viewBox="0 0 112 20"><path d="M6 1 H106" stroke="#555" stroke-width="1" stroke-dasharray="1 1"/><path d="M.8 6 V14 M111 6 V14" stroke="#666" stroke-width="1" stroke-dasharray="1 1"/><path d="M6 1 H.8 V6.5 M.8 13 V19.2 H6 M106 1 H111.2 V6.5 M111.2 13 V19.2 H106" fill="none" stroke="#e8141c" stroke-width="1.5"/></svg>

</body>
</html>
